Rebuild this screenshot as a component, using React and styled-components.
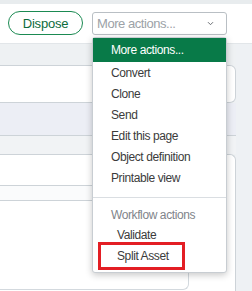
import React from "react";
import styled, { createGlobalStyle } from "styled-components";

const GlobalStyle = createGlobalStyle`
  html, body {
    margin: 0;
    padding: 0;
    background: #eef1f3;
  }
  body {
    font-family: "Liberation Sans", Arial, sans-serif;
  }
`;

const Page = styled.div`
  width: 252px;
  height: 291px;
  overflow: hidden;
  background: #eef1f3;
  display: flex;
  flex-direction: column;
`;

const TopStrip = styled.div`
  height: 4px;
  background: #e8ecee;
`;

const Header = styled.div`
  height: 39px;
  background: #ffffff;
  border-bottom: 1px solid #e2e6e9;
  display: flex;
  align-items: center;
  padding-left: 8px;
  gap: 9px;
  position: relative;
  z-index: 2;
`;

const DisposeButton = styled.button`
  width: 75px;
  height: 24px;
  border: 1px solid #1b8a52;
  border-radius: 12px;
  background: #fff;
  color: #0d6b3c;
  font-family: "Liberation Sans", Arial, sans-serif;
  font-size: 13px;
  letter-spacing: -0.2px;
  padding: 0;
  margin-top: -1px;
`;

const SelectWrap = styled.div`
  position: relative;
  width: 135px;
`;

const SelectBox = styled.div`
  box-sizing: border-box;
  height: 23px;
  border: 1px solid #b9bfc4;
  border-radius: 3px;
  display: flex;
  align-items: center;
  justify-content: space-between;
  padding: 0 12px 0 4px;
  color: #9ca2a7;
  font-size: 13px;
  letter-spacing: -0.45px;
`;

const Menu = styled.div`
  position: absolute;
  top: calc(100% + 2px);
  left: 0;
  width: 135px;
  box-sizing: border-box;
  height: 236px;
  background: #fff;
  border: 1px solid #c8cdd2;
  border-radius: 3px;
  box-shadow: 0 2px 7px rgba(0, 0, 0, 0.22);
  font-size: 12px;
  letter-spacing: -0.4px;
  color: #3b3b3b;
`;

const MenuItem = styled.div`
  display: flex;
  align-items: center;
  padding-left: ${(p) => (p.$indent ? 24 : 18)}px;
  background: ${(p) => (p.$active ? "#087a48" : "transparent")};
  color: ${(p) => (p.$active ? "#fff" : p.$muted ? "#80848a" : "#3b3b3b")};
  height: ${(p) => (p.$active ? 24 : p.$group ? 20 : 21)}px;
`;

const Divider = styled.div`
  height: 1px;
  background: #dadee2;
  margin: 9px 0 7px;
`;

const Marked = styled.div`
  box-sizing: border-box;
  width: 87px;
  height: 28px;
  margin: -3px 0 0 5px;
  border: 3px solid #e31e24;
  background: #fff;
  display: flex;
  align-items: center;
  padding-left: 16px;
  color: #3b3b3b;
`;

const Body = styled.div`
  flex: 1;
  display: flex;
`;

const Main = styled.div`
  width: 236px;
  padding-top: 21px;
  display: flex;
  flex-direction: column;
`;

const Side = styled.div`
  flex: 1;
  background: #eef1f4;
`;

const Card = styled.div`
  box-sizing: border-box;
  height: 38px;
  background: #fff;
  border: 1px solid #cdd3d8;
  border-left: none;
  border-radius: 0 6px 6px 0;
`;

const Band = styled.div`
  height: ${(p) => p.$h}px;
  background: ${(p) => p.$bg};
  border-bottom: ${(p) => (p.$line ? "1px solid #cdd3d8" : "none")};
`;

const Card2 = styled.div`
  flex: 1;
  background: #fff;
  border: 1px solid #cdd3d8;
  border-left: none;
  border-bottom: none;
  border-radius: 0 6px 0 0;
`;

const InnerCol = styled.div`
  width: 189px;
`;

const Row = styled.div`
  height: ${(p) => p.$h}px;
  background: ${(p) => p.$bg};
  border-bottom: 1px solid #cdd3d8;
`;

const InnerBox = styled.div`
  box-sizing: border-box;
  height: 89px;
  background: #fff;
  border: 1px solid #d3d9de;
  border-top: none;
  border-left: none;
  border-radius: 0 0 6px 0;
`;

const Chevron = () => (
  <svg width="7" height="5" viewBox="0 0 7 5">
    <path d="M1 1.2l2.5 2.5 2.5-2.5" fill="none" stroke="#6a6e73" strokeWidth="1" />
  </svg>
);

const items = [
  "Convert",
  "Clone",
  "Send",
  "Edit this page",
  "Object definition",
  "Printable view",
];

export default function App() {
  return (
    <>
      <GlobalStyle />
      <Page>
        <TopStrip />
        <Header>
          <DisposeButton>Dispose</DisposeButton>
          <SelectWrap>
            <SelectBox>
              More actions...
              <Chevron />
            </SelectBox>
            <Menu>
              <MenuItem $active>More actions...</MenuItem>
              {items.map((label) => (
                <MenuItem key={label}>{label}</MenuItem>
              ))}
              <Divider />
              <MenuItem $group $muted>Workflow actions</MenuItem>
              <MenuItem $group $indent>Validate</MenuItem>
              <Marked>Split Asset</Marked>
            </Menu>
          </SelectWrap>
        </Header>
        <Body>
          <Main>
            <Card />
            <Band $h={32} $bg="#eceef5" $line />
            <Band $h={18} $bg="#f1f3f5" />
            <Card2>
              <InnerCol>
                <Row $h={30} $bg="#fff" />
                <Row $h={14} $bg="#fafbfc" />
                <InnerBox />
              </InnerCol>
            </Card2>
          </Main>
          <Side />
        </Body>
      </Page>
    </>
  );
}
